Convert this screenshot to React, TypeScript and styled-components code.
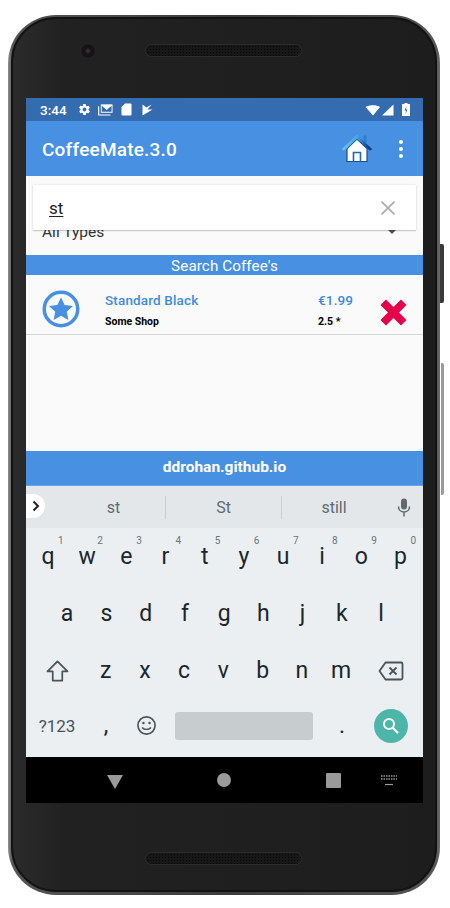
import React from "react";
import styled, { createGlobalStyle } from "styled-components";

const Global = createGlobalStyle`
  html, body { margin: 0; padding: 0; background: #fff; }
  body { font-family: Roboto, "Liberation Sans", sans-serif; }
  * { box-sizing: border-box; }
`;

const Stage = styled.div`
  width: 450px;
  height: 908px;
  padding: 15px 10px 13px 8px;
  overflow: hidden;
`;
const Phone = styled.div`
  position: relative;
  width: 432px;
  height: 880px;
  border-radius: 48px;
  background: linear-gradient(90deg, #8f8f8f 0, #555 1%, #3c3c3c 50%, #555 99%, #6a6a6a 100%);
  padding: 2px 3px 3px 3px;
`;
const SideKey = styled.div<{ $top: number; $h: number; $light?: boolean }>`
  position: absolute;
  right: -4px;
  top: ${(p) => p.$top}px;
  width: ${(p) => (p.$light ? "3px" : "4px")};
  height: ${(p) => p.$h}px;
  background: ${(p) => (p.$light ? "#9a9a9a" : "#3a3a3a")};
  border-radius: 0 2px 2px 0;
`;
const Bezel = styled.div`
  height: 100%;
  border-radius: 45px;
  background: linear-gradient(90deg, #2b2b2b 0, #212121 12%, #1d1d1d 100%);
  border: 2px solid #121212;
  padding: 79px 13px 0 13px;
  display: flex;
  flex-direction: column;
  position: relative;
`;
const Speaker = styled.div<{ $top: number }>`
  position: absolute;
  left: 132px;
  top: ${(p) => p.$top}px;
  width: 157px;
  height: 13px;
  border-radius: 7px;
  background-color: #171717;
  background-image: radial-gradient(circle, #050505 0.8px, transparent 1px);
  background-size: 3px 3px;
  border: 1px solid #2c2c2c;
`;
const Camera = styled.div`
  position: absolute;
  left: 67px;
  top: 24px;
  width: 16px;
  height: 16px;
  border-radius: 50%;
  background: radial-gradient(circle, #3a2a35 0 1.5px, #141414 3px 6px, #262626 8px);
`;
const Screen = styled.div`
  width: 397px;
  height: 705px;
  background: #fafafa;
  display: flex;
  flex-direction: column;
  color: #000;
`;
const StatusBar = styled.div`
  height: 23px;
  background: #356cb0;
  color: #fff;
  display: flex;
  align-items: center;
  padding: 0 13px 0 14px;
  font-size: 13.5px;
  font-weight: 500;
`;
const StatusTime = styled.span`
  margin-right: 11px;
`;
const StatusIcons = styled.div`
  display: flex;
  align-items: center;
  gap: 7.5px;
`;
const StatusRight = styled.div`
  margin-left: auto;
  display: flex;
  align-items: center;
  gap: 6px;
`;
const AppBar = styled.div`
  height: 55px;
  background: #4790e2;
  color: #fff;
  display: flex;
  align-items: center;
  padding: 0 20px 0 16px;
`;
const Title = styled.div`
  font-size: 19px;
  font-weight: 500;
  flex: 1;
  letter-spacing: 0.2px;
  padding-top: 1px;
`;
const HomeBtn = styled.div`
  display: flex;
  margin-right: 26px;
`;
const Dots = styled.div`
  display: flex;
  flex-direction: column;
  gap: 3px;
`;
const Dot = styled.i`
  width: 4px;
  height: 4px;
  border-radius: 50%;
  background: #fff;
`;
const SearchBar = styled.div`
  position: relative;
  z-index: 2;
  margin: 9px 7px 0;
  height: 45px;
  background: #fff;
  box-shadow: 0 1px 1px rgba(0, 0, 0, 0.16), 0 0 2px rgba(0, 0, 0, 0.12);
  display: flex;
  align-items: center;
  padding: 0 21px 0 16px;
  justify-content: space-between;
`;
const SearchText = styled.span`
  font-size: 17px;
  color: #222;
  text-decoration: underline;
  text-underline-offset: 2px;
  text-decoration-thickness: 1px;
`;
const SelectRow = styled.div`
  height: 34px;
  margin-top: -9px;
  display: flex;
  align-items: flex-start;
  justify-content: space-between;
  padding: 0 27px 0 16px;
  font-size: 15.5px;
  line-height: 23px;
  color: #333;
`;
const Caret = styled.i`
  width: 0;
  height: 0;
  border-left: 4px solid transparent;
  border-right: 4px solid transparent;
  border-top: 4px solid #555;
  margin-top: 9px;
`;
const Banner = styled.div`
  height: 20px;
  background: #4790e2;
  color: #fff;
  font-size: 15.2px;
  letter-spacing: 0.1px;
  line-height: 22px;
  text-align: center;
`;
const Row = styled.div`
  height: 60px;
  border-bottom: 1px solid #d6d6d6;
  display: flex;
  align-items: flex-start;
  padding: 0 16px;
`;
const Badge = styled.div`
  display: flex;
  margin: 15px 25px 0 0;
`;
const RowMain = styled.div`
  flex: 1;
  display: flex;
  flex-direction: column;
  gap: 7px;
  padding-top: 18px;
`;
const RowName = styled.div`
  font-size: 13.5px;
  font-weight: 500;
  letter-spacing: 0.15px;
  color: #3f8ae0;
  line-height: 15px;
`;
const RowSub = styled.div`
  font-size: 10.5px;
  font-weight: 700;
  color: #000;
  line-height: 13px;
`;
const RowPrice = styled.div`
  width: 62px;
  display: flex;
  flex-direction: column;
  gap: 7px;
  padding-top: 18px;
`;
const RowDelete = styled.div`
  display: flex;
  margin-top: 24px;
`;
const Spacer = styled.div`
  flex: 1;
`;
const Footer = styled.div`
  height: 35px;
  background: #4790e2;
  color: #fff;
  font-size: 15.5px;
  font-weight: 700;
  display: flex;
  align-items: center;
  justify-content: center;
  padding-bottom: 2px;
  border-bottom: 1px solid #6aa4e8;
`;
const Keyboard = styled.div`
  height: 271px;
  background: #eceff1;
  display: flex;
  flex-direction: column;
`;
const Suggestions = styled.div`
  position: relative;
  height: 42px;
  background: #e4e7ea;
  display: grid;
  grid-template-columns: 140px 116px 104px 37px;
  align-items: center;
  color: #5f6a70;
  font-size: 16px;
`;
const Chevron = styled.div`
  position: absolute;
  left: 0;
  top: 8px;
  width: 19px;
  height: 24px;
  background: #fff;
  border-radius: 0 12px 12px 0;
  display: flex;
  align-items: center;
  justify-content: center;
`;
const Suggestion = styled.div<{ $sep?: boolean }>`
  height: 23px;
  line-height: 23px;
  text-align: center;
  border-right: ${(p) => (p.$sep ? "1px solid #c9cdd0" : "none")};
`;
const FirstSuggestion = styled(Suggestion)`
  padding-left: 36px;
`;
const Mic = styled.div`
  display: flex;
  justify-content: center;
  padding-right: 2px;
`;
const KeyRow = styled.div<{ $cols: string }>`
  height: 57px;
  display: grid;
  grid-template-columns: ${(p) => p.$cols};
  align-items: center;
  justify-items: center;
`;
const TopRow = styled(KeyRow)`
  padding: 0 3px 0 2.5px;
`;
const LastRow = styled(KeyRow)`
  height: 58px;
  padding-bottom: 5px;
`;
const Key = styled.div`
  position: relative;
  font-size: 23px;
  line-height: 26px;
  color: #1b262c;
  text-align: center;
  width: 100%;
`;
const Hint = styled.span`
  position: absolute;
  top: -9px;
  right: 4px;
  font-size: 10px;
  line-height: 12px;
  color: #6a757b;
`;
const Sym = styled.div`
  font-size: 17px;
  color: #47545b;
`;
const SpaceKey = styled.div`
  width: 138px;
  height: 28px;
  background: #c7ccce;
  border-radius: 3px;
`;
const GoKey = styled.div`
  width: 34px;
  height: 34px;
  border-radius: 50%;
  background: #4db6a9;
  display: flex;
  align-items: center;
  justify-content: center;
`;
const NavBar = styled.div`
  height: 46px;
  background: #000;
  display: flex;
  align-items: center;
  padding: 0 26px 0 81px;
`;
const NavItem = styled.div<{ $gap?: number; $drop?: number }>`
  display: flex;
  flex: none;
  margin-left: ${(p) => p.$gap ?? 0}px;
  margin-top: ${(p) => p.$drop ?? 0}px;
`;

const letters1 = ["q","w","e","r","t","y","u","i","o","p"];
const hints = ["1","2","3","4","5","6","7","8","9","0"];

export default function App() {
  return (
    <Stage>
      <Global />
      <Phone>
        <SideKey $top={229} $h={59} />
        <SideKey $top={348} $h={132} $light />
        <Bezel>
          <Camera />
          <Speaker $top={25} />
          <Speaker $top={833} />
          <Screen>
            <StatusBar>
              <StatusTime>3:44</StatusTime>
              <StatusIcons>
                <svg width="13" height="13" viewBox="0 0 24 24" fill="#fff">
                  <path d="M19.4 13c.1-.3.1-.7.1-1s0-.7-.1-1l2.1-1.6c.2-.2.2-.4.1-.6l-2-3.5c-.1-.2-.4-.3-.6-.2l-2.5 1c-.5-.4-1.1-.7-1.7-1l-.4-2.7c0-.2-.2-.4-.5-.4h-4c-.2 0-.5.2-.5.4l-.4 2.7c-.6.2-1.1.6-1.7 1l-2.5-1c-.2-.1-.5 0-.6.2l-2 3.5c-.1.2-.1.5.1.6L4.6 11c0 .3-.1.7-.1 1s0 .7.1 1l-2.1 1.6c-.2.2-.2.4-.1.6l2 3.5c.1.2.4.3.6.2l2.5-1c.5.4 1.1.7 1.7 1l.4 2.7c0 .2.2.4.5.4h4c.2 0 .5-.2.5-.4l.4-2.7c.6-.2 1.1-.6 1.7-1l2.5 1c.2.1.5 0 .6-.2l2-3.5c.1-.2.1-.5-.1-.6L19.4 13zM12 15.500c-1.900 0-3.500-1.600-3.500-3.500s1.600-3.500 3.500-3.500 3.500 1.600 3.500 3.500-1.600 3.500-3.500 3.500z"/>
                </svg>
                <svg width="15" height="13" viewBox="0 0 16 13">
                  <path d="M3 1h12.500v9H3z" fill="#fff"/>
                  <path d="M4 2.500v6.500h10.500V2.500L9.200 7z" fill="#356cb0"/>
                  <path d="M.7 3v9.300h12.600" fill="none" stroke="#fff" strokeWidth="1.200"/>
                </svg>
                <svg width="11" height="13" viewBox="0 0 11 13">
                  <path d="M4 .5h5.500a1 1 0 0 1 1 1v10a1 1 0 0 1-1 1h-8a1 1 0 0 1-1-1V4z" fill="#fff"/>
                </svg>
                <svg width="11" height="12" viewBox="0 0 11 12" style={{ marginLeft: 3 }}>
                  <path d="M.5.5 4.500 3.500 9.500.5 5.500 5.500l5 0L.5 11.500z" fill="#fff"/>
                </svg>
              </StatusIcons>
              <StatusRight>
                <svg width="29" height="12" viewBox="0 0 29 12">
                  <path d="M.5 3C4.500.7 11.500.7 15 3L8 11.500z" fill="#fff"/>
                  <path d="M28.500.5V11.500H17z" fill="#fff"/>
                </svg>
                <svg width="8" height="13" viewBox="0 0 8 13" style={{ marginLeft: 2 }}>
                  <path d="M2.500 0h3v1H7.500a.5.5 0 0 1 .5.500V13H0V1.500A.5.5 0 0 1 .5 1h2z" fill="#fff"/>
                  <path d="M4.500 3 2.500 7.500H4L3.500 11l2-4.500H4z" fill="#356cb0"/>
                </svg>
              </StatusRight>
            </StatusBar>
            <AppBar>
              <Title>CoffeeMate.3.0</Title>
              <HomeBtn>
                <svg width="32" height="29" viewBox="0 0 32 29">
                  <defs>
                    <linearGradient id="roofG" x1="0" y1="0" x2="1" y2="0.3">
                      <stop offset="0" stopColor="#a8ecfa"/>
                      <stop offset="0.55" stopColor="#3aa0e0"/>
                      <stop offset="1" stopColor="#0c3f95"/>
                    </linearGradient>
                  </defs>
                  <path d="M22.500 1.500h3v7h-3z" fill="#2f7fc8"/>
                  <path d="M6 14.500V27.500H26V14.500L16 5z" fill="#fff" stroke="#14508f" strokeWidth="1.200"/>
                  <path d="M12.500 27.500V18.500h7v9" fill="none" stroke="#2468a8" strokeWidth="1.600"/>
                  <path d="M.6 15.200 16 .8l15.400 14.400-2.500 1.500L16 5 3.100 16.700z" fill="url(#roofG)"/>
                </svg>
              </HomeBtn>
              <Dots><Dot /><Dot /><Dot /></Dots>
            </AppBar>
            <SearchBar>
              <SearchText>st</SearchText>
              <svg width="14" height="14" viewBox="0 0 14 14">
                <path d="M.5.5l13 13M13.500.5l-13 13" stroke="#aaa" strokeWidth="1.600" fill="none"/>
              </svg>
            </SearchBar>
            <SelectRow>
              <span>All Types</span>
              <Caret />
            </SelectRow>
            <Banner>Search Coffee's</Banner>
            <Row>
              <Badge>
                <svg width="38" height="38" viewBox="0 0 39 39">
                  <circle cx="19.500" cy="19.500" r="17.200" fill="none" stroke="#4790e2" strokeWidth="3.600"/>
                  <path d="M19.500 7.500l3.700 7.900 8.600 1-6.400 5.900 1.700 8.500-7.600-4.300-7.600 4.300 1.700-8.500-6.400-5.900 8.600-1z" fill="#4790e2"/>
                </svg>
              </Badge>
              <RowMain>
                <RowName>Standard Black</RowName>
                <RowSub>Some Shop</RowSub>
              </RowMain>
              <RowPrice>
                <RowName>€1.99</RowName>
                <RowSub>2.5 *</RowSub>
              </RowPrice>
              <RowDelete>
                <svg width="27" height="27" viewBox="0 0 27 27">
                  <path d="M6 .5 13.500 8 21 .5l5.500 5.500L19 13.500 26.500 21 21 26.500 13.500 19 6 26.500.5 21 8 13.500.5 6z" fill="#e6004c"/>
                </svg>
              </RowDelete>
            </Row>
            <Spacer />
            <Footer>ddrohan.github.io</Footer>
            <Keyboard>
              <Suggestions>
                <Chevron>
                  <svg width="8" height="12" viewBox="0 0 8 12">
                    <path d="M1.500 1.500 6 6l-4.500 4.500" fill="none" stroke="#222" strokeWidth="2"/>
                  </svg>
                </Chevron>
                <FirstSuggestion $sep>st</FirstSuggestion>
                <Suggestion $sep>St</Suggestion>
                <Suggestion>still</Suggestion>
                <Mic>
                  <svg width="14" height="19" viewBox="0 0 14 19">
                    <rect x="4" y="0.500" width="6" height="11" rx="3" fill="#5f6a70"/>
                    <path d="M1.500 8.500c0 3.500 2.500 5.500 5.500 5.500s5.500-2 5.500-5.500M7 14v4.500" fill="none" stroke="#5f6a70" strokeWidth="1.500"/>
                  </svg>
                </Mic>
              </Suggestions>
              <TopRow $cols="repeat(10, 1fr)">
                {letters1.map((l, i) => (
                  <Key key={l}>{l}<Hint>{hints[i]}</Hint></Key>
                ))}
              </TopRow>
              <KeyRow $cols="21.500px repeat(9, 39.250px) 1fr">
                <span />
                {"asdfghjkl".split("").map((l) => <Key key={l}>{l}</Key>)}
                <span />
              </KeyRow>
              <KeyRow $cols="60px repeat(7, 39.250px) 1fr">
                <svg width="23" height="22" viewBox="0 0 24 23" style={{ marginLeft: 2 }}>
                  <path d="M12 1.500 22.500 12H17v9.500H7V12H1.500z" fill="none" stroke="#47545b" strokeWidth="1.800" strokeLinejoin="round"/>
                </svg>
                {"zxcvbnm".split("").map((l) => <Key key={l}>{l}</Key>)}
                <svg width="26" height="20" viewBox="0 0 26 20" style={{ marginRight: 2 }}>
                  <path d="M7.500 1.500H23a1.500 1.500 0 0 1 1.500 1.500v14a1.500 1.500 0 0 1-1.500 1.500H7.500L1.500 10z" fill="none" stroke="#47545b" strokeWidth="1.800" strokeLinejoin="round"/>
                  <path d="M11.500 6.500l7 7M18.500 6.500l-7 7" fill="none" stroke="#47545b" strokeWidth="1.800"/>
                </svg>
              </KeyRow>
              <LastRow $cols="62px 36px 44px 152px 44px 54px 5px">
                <Sym>?123</Sym>
                <Key>,</Key>
                <svg width="21" height="21" viewBox="0 0 22 22">
                  <circle cx="11" cy="11" r="9" fill="none" stroke="#47545b" strokeWidth="1.700"/>
                  <circle cx="7.800" cy="8.500" r="1.300" fill="#47545b"/>
                  <circle cx="14.200" cy="8.500" r="1.300" fill="#47545b"/>
                  <path d="M6.500 13c1.200 2.700 7.800 2.700 9 0" fill="none" stroke="#47545b" strokeWidth="1.500"/>
                </svg>
                <SpaceKey />
                <Key>.</Key>
                <GoKey>
                  <svg width="20" height="20" viewBox="0 0 20 20">
                    <circle cx="8" cy="8" r="5" fill="none" stroke="#fff" strokeWidth="2"/>
                    <path d="M11.500 11.500 17 17" stroke="#fff" strokeWidth="2.200" fill="none"/>
                  </svg>
                </GoKey>
              </LastRow>
            </Keyboard>
            <NavBar>
              <NavItem $drop={4}>
                <svg width="16" height="14" viewBox="0 0 16 14">
                  <path d="M0 0h16L8 14z" fill="#9a9a9a"/>
                </svg>
              </NavItem>
              <NavItem $gap={94}>
                <svg width="14" height="14" viewBox="0 0 14 14">
                  <circle cx="7" cy="7" r="7" fill="#9a9a9a"/>
                </svg>
              </NavItem>
              <NavItem $gap={95}>
                <svg width="15" height="15" viewBox="0 0 15 15">
                  <rect width="15" height="15" rx="1" fill="#9a9a9a"/>
                </svg>
              </NavItem>
              <NavItem $gap={40}>
                <svg width="16" height="11" viewBox="0 0 16 11">
                  <path d="M0 1h16M0 4h16" stroke="#9a9a9a" strokeWidth="1.500" strokeDasharray="1.500 1"/>
                  <path d="M4 9.500h8" stroke="#9a9a9a" strokeWidth="1.200"/>
                </svg>
              </NavItem>
            </NavBar>
          </Screen>
        </Bezel>
      </Phone>
    </Stage>
  );
}
